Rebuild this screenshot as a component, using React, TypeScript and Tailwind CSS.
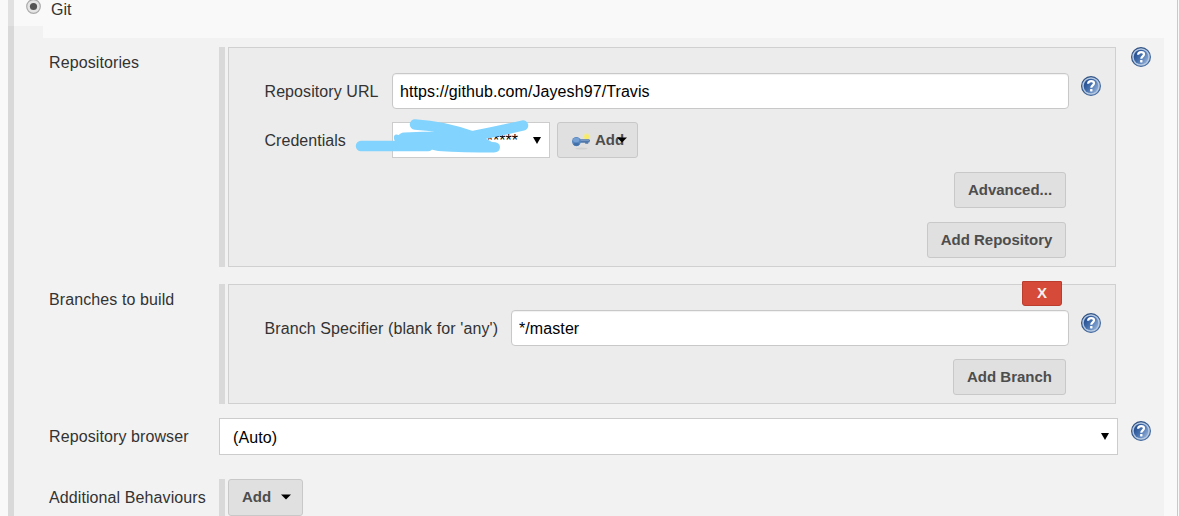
import type { ReactNode } from 'react';

function HelpIcon({ className = '' }: { className?: string }) {
  return (
    <svg viewBox="0 0 20 20" className={`size-5 shrink-0 ${className}`} aria-label="Help">
      <defs>
        <linearGradient id="helpFill" x1="0" y1="0.2" x2="1" y2="0.9">
          <stop offset="0" stopColor="#1f4789" />
          <stop offset="0.45" stopColor="#4570ae" />
          <stop offset="1" stopColor="#9db9de" />
        </linearGradient>
        <linearGradient id="helpRim" x1="0" y1="0" x2="1" y2="1">
          <stop offset="0" stopColor="#2b4a78" />
          <stop offset="1" stopColor="#4b73a8" />
        </linearGradient>
      </defs>
      <circle cx="10" cy="10" r="9.4" fill="#b5c8e2" stroke="url(#helpRim)" strokeWidth="1.2" />
      <circle cx="10" cy="10" r="7.3" fill="url(#helpFill)" />
      <path d="M7.1 7.7C7.2 5.9 8.4 5.1 10.1 5.1c1.8 0 2.9.8 2.9 2.2 0 1.9-2.7 2.2-2.7 4.4" fill="none" stroke="#fff" strokeWidth="2.2" />
      <rect x="9.1" y="12.9" width="2.4" height="2.6" rx=".4" fill="#fff" />
    </svg>
  );
}

function Arrow({ className = '' }: { className?: string }) {
  return (
    <svg viewBox="0 0 8 7" className={`h-[7px] w-2 shrink-0 ${className}`}>
      <path d="M0 0h8L4 7z" fill="#000" />
    </svg>
  );
}

function MenuArrow({ className = '' }: { className?: string }) {
  return (
    <svg viewBox="0 0 10 6" className={`h-1.5 w-2.5 shrink-0 ${className}`}>
      <path d="M0 .5h10L5 5.5z" fill="#000" />
    </svg>
  );
}

function Button({ className, children }: { className: string; children: ReactNode }) {
  return (
    <button
      className={`flex shrink-0 items-center rounded-[3px] border border-[#c8c8c8] bg-[#e0e0e0] text-[15px] font-bold text-[#4d4d4d] ${className}`}
    >
      {children}
    </button>
  );
}

function TextField({ value, className }: { value: string; className: string }) {
  return (
    <input
      readOnly
      value={value}
      className={`h-9 shrink-0 rounded-[4px] border border-[#c8c8c8] bg-white px-[7px] pt-0.5 text-base tracking-[0.09px] text-black shadow-[inset_0_1px_1px_rgba(0,0,0,0.06)] outline-none ${className}`}
    />
  );
}

function Row({ label, labelClass = 'pt-1', className, children }: { label: string; labelClass?: string; className: string; children: ReactNode }) {
  return (
    <div className={`flex items-start ${className}`}>
      <div className={`w-[170px] shrink-0 whitespace-nowrap leading-6 tracking-[0.1px] ${labelClass}`}>{label}</div>
      {children}
    </div>
  );
}

function KeyIcon() {
  return (
    <svg viewBox="0 0 20 20" className="ml-[13px] size-5 shrink-0">
      <ellipse cx="10.5" cy="18.6" rx="6" ry="1" fill="#d0d0d0" />
      <circle cx="15.6" cy="7" r="3.7" fill="#ece7a8" />
      <circle cx="15.6" cy="6.8" r="2.4" fill="#f8ec62" />
      <path d="M8 9.2h10.2l.9 1.4-.9 1.8h-1v1.4h-3v-1H8z" fill="#5078aa" />
      <path d="M8 9.8h10v1H8z" fill="#7c9fc8" />
      <ellipse cx="5.4" cy="11.6" rx="4.4" ry="4.6" fill="#5585bf" />
      <ellipse cx="5.2" cy="10" rx="3.2" ry="2.2" fill="#75a0d3" />
      <ellipse cx="5.4" cy="14.4" rx="3" ry="1.4" fill="#4170a9" />
    </svg>
  );
}

export default function App() {
  return (
    <div className="flex h-[516px] w-[1179px] overflow-hidden bg-[#f9f9f9] pl-2 font-['Liberation_Sans',Arial,sans-serif] text-base text-[#333]">
      <div className="flex w-1.5 shrink-0 flex-col">
        <div className="h-[26px] bg-[#e1e1e1]" />
        <div className="flex-1 bg-[#d9d9d9]" />
      </div>
      <div className="w-[1164px] shrink-0 border-r border-[#c9c9c9]">
        <div className="flex h-[26px] items-start pl-3">
          <svg viewBox="0 0 16 16" className="-mt-px size-4 shrink-0">
            <circle cx="7.5" cy="7.5" r="6.8" fill="#e5e5e5" stroke="#aaa" strokeWidth="1.2" />
            <circle cx="7.5" cy="7.5" r="3.6" fill="#555" />
          </svg>
          <span className="ml-[9px] mt-[-2px] leading-6">Git</span>
        </div>
        <div className="h-3 w-[29px] bg-[#f2f2f2]" />
        <div className="h-[478px] w-[1150px] bg-[#f2f2f2] pl-[35px] pt-[9px]">
          <Row label="Repositories" className="h-[237px]">
            <div className="h-[220px] w-1.5 shrink-0 bg-[#d9d9d9]" />
            <div className="ml-[3px] h-[220px] w-[888px] shrink-0 border border-[#d0d0d0] bg-[#ececec] pl-[35px] pt-[25px]">
              <div className="flex h-[49px] items-start">
                <div className="w-32 shrink-0 pl-[0.5px] pt-[7px] leading-6 tracking-[0.08px]">Repository URL</div>
                <TextField value="https://github.com/Jayesh97/Travis" className="w-[677px]" />
                <HelpIcon className="ml-3 mt-[3px]" />
              </div>
              <div className="relative flex h-[50px] items-start">
                <div className="w-32 shrink-0 pl-[0.5px] pt-[7px] leading-6 tracking-[0.04px]">Credentials</div>
                <div className="flex h-9 w-[158px] shrink-0 items-center justify-end border border-[#ccc] bg-white pr-2 text-black">
                  <span className="mr-[15px] mt-0.5 leading-6">*****</span>
                  <Arrow />
                </div>
                <Button className="ml-[7px] h-9 w-[81px]">
                  <KeyIcon />
                  <span className="ml-1">Add</span>
                  <MenuArrow className="-ml-[7px]" />
                </Button>
                <svg viewBox="0 0 180 38" className="absolute left-[90px] top-[-5px] h-[38px] w-[180px]">
                  <path
                    d="M7 29H74M61 7.5Q90 9 120 20M115 20Q145 14 169 8.5"
                    fill="none"
                    stroke="#82d4fe"
                    strokeWidth="10.5"
                    strokeLinecap="round"
                    strokeLinejoin="round"
                  />
                  <path
                    d="M45 18Q39 16 40 22Q41 27 48 29L75 32L84 34Q110 35.5 140 35.5Q146 35 146 30Q146 25 138 25L125 18L115 15Q80 14 50 15.5Q46 16 45 18z"
                    fill="#82d4fe"
                  />
                </svg>
              </div>
              <div className="flex w-[802px] flex-col items-end gap-[14px]">
                <Button className="h-9 w-28 justify-center">Advanced...</Button>
                <Button className="h-9 w-[139px] justify-center">Add Repository</Button>
              </div>
            </div>
            <HelpIcon className="ml-[15px]" />
          </Row>
          <Row label="Branches to build" className="h-[134px]">
            <div className="h-[120px] w-1.5 shrink-0 bg-[#d9d9d9]" />
            <div className="relative ml-[3px] h-[120px] w-[888px] shrink-0 border border-[#d0d0d0] bg-[#ececec] pl-[35px] pt-[25px]">
              <button className="absolute left-[793px] top-[-4px] flex h-[25px] w-10 items-center justify-center rounded-b-[3px] rounded-t-[1px] border border-[#bb3d2e] bg-[#d54a39] text-[15px] font-bold text-[#f5efed]">
                X
              </button>
              <div className="flex h-[49px] items-start">
                <div className="w-[247px] shrink-0 whitespace-nowrap pl-[0.5px] pt-[7px] leading-6 tracking-[0.1px]">Branch Specifier (blank for 'any')</div>
                <TextField value="*/master" className="w-[558px]" />
                <HelpIcon className="ml-3 mt-[3px]" />
              </div>
              <div className="flex w-[802px] justify-end">
                <Button className="h-9 w-[113px] justify-center">Add Branch</Button>
              </div>
            </div>
          </Row>
          <Row label="Repository browser" labelClass="pt-[7px]" className="h-[61px]">
            <div className="flex h-[37px] w-[899px] shrink-0 items-center justify-between border border-[#ccc] bg-white pl-[13px] pr-2 text-black">
              <span className="pt-0.5 tracking-[0.1px]">(Auto)</span>
              <Arrow />
            </div>
            <HelpIcon className="ml-[13px] mt-[3px]" />
          </Row>
          <Row label="Additional Behaviours" labelClass="pt-[7px]" className="h-[37px]">
            <div className="h-[37px] w-1.5 shrink-0 bg-[#d9d9d9]" />
            <Button className="ml-[3px] h-[37px] w-[75px] pl-[13px]">
              <span>Add</span>
              <MenuArrow className="-mt-0.5 ml-[10px]" />
            </Button>
          </Row>
        </div>
      </div>
    </div>
  );
}
